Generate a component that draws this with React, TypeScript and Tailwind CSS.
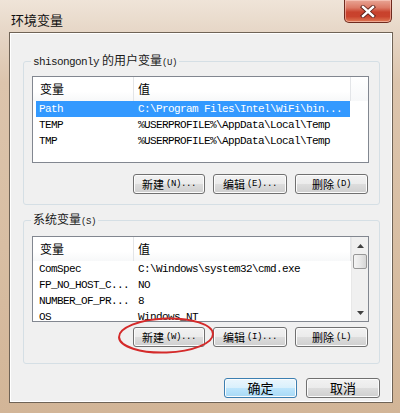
import React from "react";

const mono = "font-['Liberation_Mono','DejaVu_Sans_Mono',monospace]";
const cjk = "font-['Noto_Sans_CJK_SC','Noto_Sans',sans-serif]";

const btnBase =
  "h-[20px] rounded-[3px] border flex items-center justify-center text-black shadow-[inset_0_0_0_1px_#fcfcfc]";
const btnGray =
  "border-[#707070] bg-[linear-gradient(180deg,#f2f2f2_0%,#ebebeb_50%,#dddddd_50%,#cfcfcf_100%)]";
const btnBlue =
  "border-[#3c7fb1] bg-[linear-gradient(180deg,#eaf6fd_0%,#d9f0fc_50%,#bee6fd_50%,#a7d9f5_100%)]";

function Btn({
  cls,
  main,
  suffix,
  blue,
}: {
  cls: string;
  main: string;
  suffix?: string;
  blue?: boolean;
}) {
  return (
    <div className={`${btnBase} ${blue ? btnBlue : btnGray} ${cls}`}>
      <span className={`${cjk} ${suffix ? "text-[11px]" : "text-[13px]"} leading-[16px]`}>{main}</span>
      {suffix && (
        <span className={`${mono} text-[9px] leading-[16px] tracking-[-0.4px] pl-[2px]`}>{suffix}</span>
      )}
    </div>
  );
}

function Row({ name, value, selected }: { name: string; value: string; selected?: boolean }) {
  return (
    <div
      className={`ml-[3px] w-[314px] h-[16px] flex items-center ${
        selected ? "bg-[#3399ff] text-white" : "text-black"
      }`}
    >
      <div
        className={`${mono} w-[98px] pl-[3px] text-[11px] leading-[16px] tracking-[-0.6px] whitespace-nowrap overflow-hidden`}
      >
        {name}
      </div>
      <div
        className={`${mono} flex-1 pl-[4px] text-[11px] leading-[16px] tracking-[-0.6px] whitespace-nowrap overflow-hidden`}
      >
        {value}
      </div>
    </div>
  );
}

function Header() {
  return (
    <div className="h-[24px] flex bg-[linear-gradient(180deg,#ffffff_0%,#ffffff_60%,#f7f8f9_100%)]">
      <div
        className={`${cjk} w-[101px] border-r border-[#e3e5e8] pl-[7px] text-[12px] leading-[24px] text-black`}
      >
        变量
      </div>
      <div
        className={`${cjk} w-[217px] border-r border-[#e3e5e8] pl-[4px] text-[12px] leading-[24px] text-black`}
      >
        值
      </div>
    </div>
  );
}

function Arrow({ up }: { up?: boolean }) {
  return (
    <svg width="7" height="4" viewBox="0 0 7 4">
      {up ? <path d="M0 4 L3.5 0 L7 4 Z" fill="#404040" /> : <path d="M0 0 L3.5 4 L7 0 Z" fill="#404040" />}
    </svg>
  );
}

export default function App() {
  return (
    <div className="relative w-[400px] h-[413px] overflow-hidden bg-[linear-gradient(180deg,#efe4d8_0%,#e6d6c6_8%,#dcc4ac_20%,#d8bea3_60%,#d2b597_100%)]">
      {/* title bar */}
      <div className="h-[32px] flex items-start">
        <div className={`${cjk} mt-[12px] ml-[11px] text-[13px] leading-[16px] text-[#111]`}>环境变量</div>
        <div className="ml-auto mr-[8px] w-[48px] h-[23px] rounded-b-[5px] border border-t-0 border-[#6e2a1e] bg-[linear-gradient(180deg,#e9a595_0%,#dc7a66_35%,#c8412c_55%,#c9432d_75%,#e07a55_100%)] flex items-center justify-center shadow-[inset_0_0_0_1px_rgba(255,220,210,0.5)]">
          <svg width="16" height="13" viewBox="0 0 16 13">
            <path d="M3 2 L13 11 M13 2 L3 11" stroke="#5a2018" strokeWidth="4.2" strokeLinecap="square" />
            <path d="M3 2 L13 11 M13 2 L3 11" stroke="#ffffff" strokeWidth="2.4" strokeLinecap="square" />
          </svg>
        </div>
      </div>

      {/* client area */}
      <div className="ml-[9px] w-[384px] h-[371px] border border-[#6f6356] bg-[#f0f0f0] shadow-[inset_0_0_0_1px_#ffffff] flex flex-col">
        {/* user vars */}
        <fieldset className="mt-[20px] ml-[13px] mr-[12px] border border-[#d5dfe5] rounded-[3px] p-0 m-0">
          <legend className="ml-[7px] px-[2px] text-[12px] leading-[14px] text-[#1a1a1a] whitespace-nowrap">
            <span className={`${mono} text-[11px] tracking-[-0.6px]`}>shisongonly</span>
            <span className={`${cjk} pl-[3px]`}>的用户变量</span>
            <span className={`${mono} text-[9px] tracking-[-0.4px]`}>(U)</span>
          </legend>
          <div className="mt-[6px] ml-[8px] w-[337px] h-[87px] border border-[#828790] bg-white flex flex-col overflow-hidden">
            <div className="flex">
              <Header />
              <div className="flex-1 h-[24px] bg-[linear-gradient(180deg,#ffffff_0%,#f7f8f9_100%)]" />
            </div>
            <Row name="Path" value="C:\Program Files\Intel\WiFi\bin..." selected />
            <Row name="TEMP" value="%USERPROFILE%\AppData\Local\Temp" />
            <Row name="TMP" value="%USERPROFILE%\AppData\Local\Temp" />
          </div>
          <div className="mt-[11px] mb-[10px] mr-[11px] flex justify-end gap-[8px]">
            <Btn cls="w-[72px]" main="新建" suffix="(N)..." />
            <Btn cls="w-[74px]" main="编辑" suffix="(E)..." />
            <Btn cls="w-[73px]" main="删除" suffix="(D)" />
          </div>
        </fieldset>

        {/* system vars */}
        <fieldset className="mt-[7px] ml-[13px] mr-[12px] border border-[#d5dfe5] rounded-[3px] p-0 m-0">
          <legend className="ml-[7px] px-[2px] text-[12px] leading-[14px] text-[#1a1a1a] whitespace-nowrap">
            <span className={`${cjk}`}>系统变量</span>
            <span className={`${mono} text-[9px] tracking-[-0.4px]`}>(S)</span>
          </legend>
          <div className="mt-[7px] ml-[8px] w-[337px] h-[86px] border border-[#828790] bg-white flex overflow-hidden">
            <div className="w-[318px] flex flex-col overflow-hidden">
              <Header />
              <Row name="ComSpec" value="C:\Windows\system32\cmd.exe" />
              <Row name="FP_NO_HOST_C..." value="NO" />
              <Row name="NUMBER_OF_PR..." value="8" />
              <Row name="OS" value="Windows_NT" />
            </div>
            <div className="w-[17px] flex flex-col bg-[#f0f0f0] border-l border-[#e8e8e8]">
              <div className="h-[17px] flex items-center justify-center">
                <Arrow up />
              </div>
              <div className="mx-[1px] h-[15px] rounded-[2px] border border-[#979797] bg-[linear-gradient(90deg,#f4f4f4_0%,#e8e8e8_50%,#d6d6d6_100%)]" />
              <div className="flex-1" />
              <div className="h-[17px] flex items-center justify-center">
                <Arrow />
              </div>
            </div>
          </div>
          <div className="mt-[5px] mb-[16px] mr-[11px] flex justify-end gap-[8px]">
            <Btn cls="w-[72px]" main="新建" suffix="(W)..." />
            <Btn cls="w-[74px]" main="编辑" suffix="(I)..." />
            <Btn cls="w-[73px]" main="删除" suffix="(L)" />
          </div>
        </fieldset>

        <div className="mt-[14px] mr-[12px] flex justify-end gap-[9px]">
          <Btn cls="w-[73px]" main="确定" blue />
          <Btn cls="w-[74px]" main="取消" />
        </div>
      </div>

      {/* red annotation ellipse */}
      <svg className="absolute left-[116px] top-[316px]" width="100" height="40" viewBox="0 0 100 40">
        <ellipse cx="50" cy="19.5" rx="47" ry="17" fill="none" stroke="#d42a2a" strokeWidth="2" transform="rotate(-2 50 19.5)" />
      </svg>
    </div>
  );
}
